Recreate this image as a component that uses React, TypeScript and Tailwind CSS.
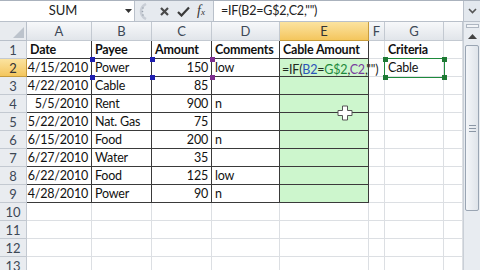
import React from "react";

const F = { fontFamily: "Lato, 'Open Sans', sans-serif" };

const cols = ["A", "B", "C", "D", "E", "F", "G", "H"];

type Cell = { t?: string; b?: boolean; r?: boolean };

const rows: Cell[][] = [
  [{ t: "Date", b: true }, { t: "Payee", b: true }, { t: "Amount", b: true }, { t: "Comments", b: true }, { t: "Cable Amount", b: true }, {}, { t: "Criteria", b: true }, {}],
  [{ t: "4/15/2010", r: true }, { t: "Power" }, { t: "150", r: true }, { t: "low" }, {}, {}, { t: "Cable" }, {}],
  [{ t: "4/22/2010", r: true }, { t: "Cable" }, { t: "85", r: true }, {}, {}, {}, {}, {}],
  [{ t: "5/5/2010", r: true }, { t: "Rent" }, { t: "900", r: true }, { t: "n" }, {}, {}, {}, {}],
  [{ t: "5/22/2010", r: true }, { t: "Nat. Gas" }, { t: "75", r: true }, {}, {}, {}, {}, {}],
  [{ t: "6/15/2010", r: true }, { t: "Food" }, { t: "200", r: true }, { t: "n" }, {}, {}, {}, {}],
  [{ t: "6/27/2010", r: true }, { t: "Water" }, { t: "35", r: true }, {}, {}, {}, {}, {}],
  [{ t: "6/22/2010", r: true }, { t: "Food" }, { t: "125", r: true }, { t: "low" }, {}, {}, {}, {}],
  [{ t: "4/28/2010", r: true }, { t: "Power" }, { t: "90", r: true }, { t: "n" }, {}, {}, {}, {}],
  [{}, {}, {}, {}, {}, {}, {}, {}],
  [{}, {}, {}, {}, {}, {}, {}, {}],
  [{}, {}, {}, {}, {}, {}, {}, {}],
  [{}, {}, {}, {}, {}, {}, {}, {}],
];

function Corner({ x, y, c }: { x: number; y: number; c: string }) {
  return (
    <div
      className="absolute w-[5px] h-[5px] z-20"
      style={{ left: x - 2, top: y - 2, background: c }}
    />
  );
}

export default function App() {
  return (
    <div className="w-[480px] h-[270px] overflow-hidden bg-white text-[12.5px] tracking-[-0.2px] text-[#111]" style={F}>
      {/* Formula bar */}
      <div className="flex h-[22px] border-t border-[#aab2bd] border-b border-b-[#b9c0ca] bg-[#e6eaef]">
        <div className="flex w-[135px] items-center bg-white border-r border-[#b9c0ca]">
          <div className="flex-1 text-center text-[13px] tracking-normal text-[#222] pl-[4px]">SUM</div>
          <div className="w-[12px] flex justify-center">
            <svg width="7" height="5" viewBox="0 0 7 5"><path d="M0 0h7L3.5 4z" fill="#333" /></svg>
          </div>
        </div>
        <div className="w-[16px] flex items-center justify-center">
          <svg width="9" height="17" viewBox="0 0 9 17">
            <path d="M7 1C3 3 2 6 2 8.5S3 14 7 16" fill="none" stroke="#c9ced6" strokeWidth="2.5" />
            <circle cx="4" cy="5" r="0.8" fill="#9aa3ae" />
            <circle cx="3.5" cy="8.5" r="0.8" fill="#9aa3ae" />
            <circle cx="4" cy="12" r="0.8" fill="#9aa3ae" />
          </svg>
        </div>
        <div className="flex items-center gap-[7px] pl-[8px] w-[62px]">
          <svg width="11" height="11" viewBox="0 0 11 11">
            <path d="M2 2l7 7M9 2l-7 7" stroke="#4a4a4a" strokeWidth="2.2" />
          </svg>
          <svg width="13" height="11" viewBox="0 0 13 11">
            <path d="M1 6l3.5 3.5L12 1.5" fill="none" stroke="#3a3a3a" strokeWidth="2.2" />
          </svg>
          <span className="text-[14px] italic text-[#333] leading-none tracking-normal" style={{ fontFamily: "'Liberation Serif', serif" }}>
            f<span className="text-[9px]">x</span>
          </span>
        </div>
        <div className="flex-1 bg-white border-l border-[#b9c0ca] flex items-center pl-[7px] pt-[1px] text-[#222]">
          =IF(B2=G$2,C2,"")
        </div>
        <div className="w-[17px] bg-[#e3e8ee] border-l border-[#b9c0ca] flex items-center justify-center">
          <svg width="9" height="6" viewBox="0 0 9 6"><path d="M1 1l3.5 3.5L8 1" fill="none" stroke="#555" strokeWidth="1.6" /></svg>
        </div>
      </div>

      <div className="flex h-[248px]">
        {/* Grid */}
        <div className="relative w-[463px] overflow-hidden">
          <div className="grid grid-cols-[27px_65px_60px_60px_68px_89px_16px_59px_19px] grid-rows-[19px_repeat(13,18px)]">
            {/* header row */}
            <div className="bg-[#e8ebef] border-r border-b border-[#b9c0ca] flex items-end justify-end p-[2px]">
              <svg width="11" height="11" viewBox="0 0 11 11"><path d="M11 0v11H0z" fill="#bcc3cc" /></svg>
            </div>
            {cols.map((c) => (
              <div
                key={c}
                className={
                  c === "E"
                    ? "bg-gradient-to-b from-[#fbe39f] to-[#f4c65c] border-r border-b border-[#c69b3c] flex items-center justify-center pt-[1px] text-[13px] tracking-normal text-[#333]"
                    : "bg-gradient-to-b from-[#f7f8fa] to-[#e1e5ea] border-r border-b border-[#c3c9d1] flex items-center justify-center pt-[1px] text-[13px] tracking-normal text-[#3d4856]"
                }
              >
                {c === "H" ? "" : c}
              </div>
            ))}
            {rows.map((row, ri) => (
              <React.Fragment key={ri}>
                <div
                  className={
                    ri === 1
                      ? "bg-gradient-to-b from-[#fbe39f] to-[#f4c65c] border-r border-b border-[#c69b3c] flex items-center justify-center pt-[2px] text-[13px] tracking-normal text-[#333]"
                      : "bg-[#e9ecf0] border-r border-b border-[#c3c9d1] flex items-center justify-center pt-[2px] text-[13px] tracking-normal text-[#3d4856]"
                  }
                >
                  {ri + 1}
                </div>
                {row.map((cell, ci) => {
                  const data = ri <= 8 && ci <= 4;
                  const green = ci === 4 && ri >= 1 && ri <= 8;
                  const border = data ? "border-[#3a3a3a]" : "border-[#dcdfe3]";
                  const bg = green ? "bg-[#cdf6cd]" : "bg-white";
                  return (
                    <div
                      key={ci}
                      className={`relative ${bg} border-r border-b ${border} flex items-center ${cell.r ? "justify-end" : "justify-start"} px-[3px] pt-[2px] whitespace-nowrap ${cell.b ? "font-bold" : ""}`}
                    >
                      {ri === 1 && ci === 4 ? (
                        <span className="absolute left-[2px] top-[2px] z-10">
                          <span className="text-[#1f2a1f]">=IF(</span>
                          <span className="text-[#2c55b8]">B2</span>
                          <span className="text-[#1f2a1f]">=</span>
                          <span className="text-[#1e8a3c]">G$2</span>
                          <span className="text-[#1f2a1f]">,</span>
                          <span className="text-[#7a3f9e]">C2</span>
                          <span className="text-[#1f2a1f]">,"")</span>
                        </span>
                      ) : (
                        cell.t
                      )}
                    </div>
                  );
                })}
              </React.Fragment>
            ))}
          </div>

          {/* range highlights */}
          <Corner x={92} y={37} c="#1f1fb0" />
          <Corner x={92} y={55} c="#1f1fb0" />
          <Corner x={152} y={37} c="#1f1fb0" />
          <Corner x={152} y={55} c="#1f1fb0" />
          <Corner x={212} y={37} c="#7d2d8f" />
          <Corner x={212} y={55} c="#7d2d8f" />
          <div className="absolute left-[384px] top-[36px] w-[61px] h-[20px] border border-[#1e8a3c]" />
          <Corner x={385} y={37} c="#1e7a34" />
          <Corner x={385} y={55} c="#1e7a34" />
          <Corner x={444} y={37} c="#1e7a34" />
          <Corner x={444} y={55} c="#1e7a34" />

          {/* cursor */}
          <svg className="absolute left-[337px] top-[83px] z-20" width="16" height="16" viewBox="0 0 16 16">
            <path d="M5.5 1h5v4.5H15v5h-4.5V15h-5v-4.5H1v-5h4.5z" fill="#fff" stroke="#555" strokeWidth="1" />
          </svg>
        </div>

        {/* Scrollbar */}
        <div className="w-[17px] bg-[#e8ecf1] border-l border-[#c9cfd7] flex flex-col items-center">
          <div className="w-[13px] h-[4px] mt-[2px] border border-[#aeb6c1] bg-[#f3f5f8]" />
          <div className="h-[14px] flex items-center justify-center mt-[1px]">
            <svg width="9" height="5" viewBox="0 0 9 5"><path d="M0 5h9L4.5 0z" fill="#444" /></svg>
          </div>
          <div className="mt-[2px] w-[14px] h-[166px] rounded-[2px] border border-[#9aa5b3] bg-gradient-to-r from-[#f4f6f9] to-[#dfe4ea] flex items-center justify-center">
            <div className="flex flex-col gap-[2px]">
              <div className="w-[7px] h-[1px] bg-[#8a96a5]" />
              <div className="w-[7px] h-[1px] bg-[#8a96a5]" />
              <div className="w-[7px] h-[1px] bg-[#8a96a5]" />
            </div>
          </div>
        </div>
      </div>
    </div>
  );
}
